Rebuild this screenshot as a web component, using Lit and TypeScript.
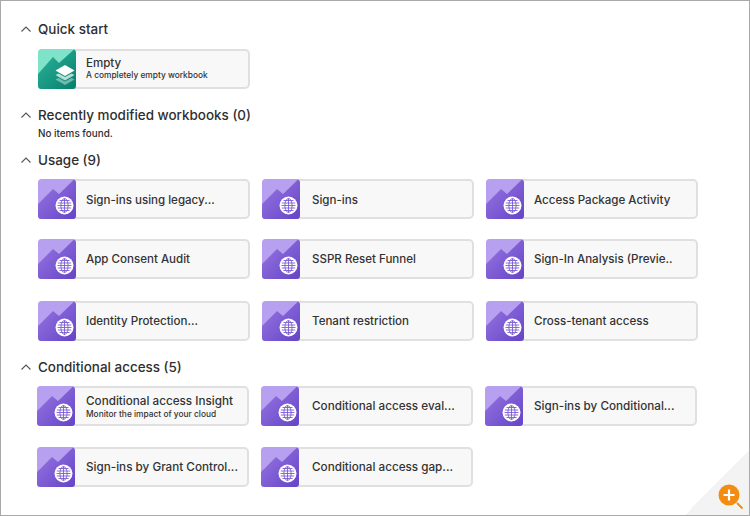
import { LitElement, html, css, svg } from "lit";
import { customElement } from "lit/decorators.js";

type Card = { t: string; s?: string };

const usage: Card[][] = [
  [{ t: "Sign-ins using legacy..." }, { t: "Sign-ins" }, { t: "Access Package Activity" }],
  [{ t: "App Consent Audit" }, { t: "SSPR Reset Funnel" }, { t: "Sign-In Analysis (Previe.." }],
  [{ t: "Identity Protection..." }, { t: "Tenant restriction" }, { t: "Cross-tenant access" }],
];
const cond: Card[][] = [
  [
    { t: "Conditional access Insight", s: "Monitor the impact of your cloud" },
    { t: "Conditional access eval..." },
    { t: "Sign-ins by Conditional..." },
  ],
  [{ t: "Sign-ins by Grant Control..." }, { t: "Conditional access gap..." }],
];

const chevron = html`<svg class="chev" width="12" height="8" viewBox="0 0 12 8" fill="none"><path d="M1.500 6.500 6 2l4.500 4.500" stroke="#555" stroke-width="1.100"/></svg>`;

const purpleIcon = html`<svg class="ico" width="38" height="40" viewBox="0 0 38 40">
  <defs>
    <linearGradient id="pg" x1="0" y1="0" x2="1" y2="1"><stop offset="0" stop-color="#9a78e4"/><stop offset="1" stop-color="#6444c6"/></linearGradient>
  </defs>
  <rect width="38" height="40" rx="3.500" fill="#b8a0f0"/>
  <path d="M0 25 15 10l6 5L36 .5A3.500 3.500 0 0 1 38 3.500v33a3.500 3.500 0 0 1-3.500 3.500h-31A3.500 3.500 0 0 1 0 36.500z" fill="url(#pg)"/>
  <circle cx="26.500" cy="26.500" r="9" fill="#fff"/>
  ${svg`<g fill="none" stroke="#7c5cd2" stroke-width=".9">
    <ellipse cx="26.500" cy="26.500" rx="3.600" ry="7"/>
    <path d="M26.500 19.500v14M19.800 24h13.400M19.800 29h13.400M21.500 21.500h10M21.500 31.500h10M19.500 26.500h14"/>
  </g>`}
</svg>`;

const greenIcon = html`<svg class="ico" width="38" height="40" viewBox="0 0 38 40">
  <defs>
    <linearGradient id="gg" x1="0" y1="0" x2="1" y2="1"><stop offset="0" stop-color="#2eb49c"/><stop offset="1" stop-color="#067f6c"/></linearGradient>
  </defs>
  <rect width="38" height="40" rx="3.500" fill="#7fe3c9"/>
  <path d="M0 25 15 8l6 6L36 .5A3.500 3.500 0 0 1 38 3.500v33a3.500 3.500 0 0 1-3.500 3.500h-31A3.500 3.500 0 0 1 0 36.500z" fill="url(#gg)"/>
  <path d="M27 36l-9.500-5.500 3-1.500 6.500 3.500 6.500-3.500 3 1.500z" fill="#fff" opacity=".4"/>
  <path d="M27 31.500l-9.500-5.500 3-1.500 6.500 3.500 6.500-3.500 3 1.500z" fill="#fff" opacity=".7"/>
  <path d="M27 27l-9.500-5.500L27 16l9.500 5.500z" fill="#fff"/>
</svg>`;

@customElement("app-root")
export class AppRoot extends LitElement {
  static styles = css`
    :host {
      display: block;
      box-sizing: border-box;
      width: 750px;
      height: 516px;
      border: 1px solid #a9a9a9;
      background: #fff;
      font-family: Inter, "Liberation Sans", sans-serif;
      color: #2f2f2f;
      overflow: hidden;
      position: relative;
      padding: 19px 0 0 19px;
    }
    .head {
      display: flex;
      align-items: center;
      height: 17px;
      gap: 6px;
      font-size: 13.450px;
      font-weight: 500;
      white-space: nowrap;
    }
    .chev { flex: none; }
    .rows { padding: 12px 0 0 18px; }
    .row { display: flex; gap: 12.500px; }
    .quick { height: 86px; }
    .quick .txt { padding-bottom: 2px; }
    .recent { height: 45px; }
    .none {
      font-size: 9.900px;
      font-weight: 500;
      padding: 4px 0 0 18px;
      line-height: 12px;
    }
    .usage { height: 207px; }
    .usage .rows { padding-top: 11px; }
    .usage .row:nth-child(1) .txt { padding-top: 1px; }
    .usage .row:nth-child(2) { margin-top: 20px; }
    .usage .row:nth-child(3) { margin-top: 22px; }
    .usage .card:nth-child(2) .txt { padding-left: 12px; }
    .cond .rows { padding: 11px 0 0 17px; }
    .cond .row:nth-child(2) { margin-top: 21px; }
    .cond .t { font-size: 11.700px; }
    .cond .s { margin-top: 1px; }
    .cond .txt { padding-left: 11px; }
    .cond .card:nth-child(2) .txt { padding-left: 13px; }
    .card {
      box-sizing: border-box;
      width: 211.500px;
      height: 40px;
      display: flex;
      align-items: stretch;
      background: #f8f8f8;
      border: 2px solid #e0e0e0;
      border-left: none;
      border-radius: 5px;
    }
    .ico { flex: none; margin: -2px 0; display: block; }
    .txt {
      flex: 1;
      min-width: 0;
      padding-left: 10px;
      display: flex;
      flex-direction: column;
      justify-content: center;
      white-space: nowrap;
    }
    .t { font-size: 11.550px; font-weight: 500; line-height: 14px; color: #333; }
    .s { font-size: 8.350px; font-weight: 500; line-height: 10px; color: #333; }
    .corner {
      position: absolute;
      right: 0;
      bottom: 0;
      width: 64px;
      height: 64px;
      background: linear-gradient(135deg, transparent 50%, #f3f3f3 50%);
    }
    .zoom { position: absolute; right: 0; bottom: 0; }
  `;

  private card(c: Card, icon = purpleIcon) {
    return html`<div class="card">
      ${icon}
      <div class="txt">
        <div class="t">${c.t}</div>
        ${c.s ? html`<div class="s">${c.s}</div>` : ""}
      </div>
    </div>`;
  }

  render() {
    return html`
      <section class="quick">
        <div class="head">${chevron}<span>Quick start</span></div>
        <div class="rows"><div class="row">${this.card({ t: "Empty", s: "A completely empty workbook" }, greenIcon)}</div></div>
      </section>
      <section class="recent">
        <div class="head">${chevron}<span>Recently modified workbooks (0)</span></div>
        <div class="none">No items found.</div>
      </section>
      <section class="usage">
        <div class="head">${chevron}<span>Usage (9)</span></div>
        <div class="rows">
          ${usage.map((r) => html`<div class="row">${r.map((c) => this.card(c))}</div>`)}
        </div>
      </section>
      <section class="cond">
        <div class="head">${chevron}<span>Conditional access (5)</span></div>
        <div class="rows">
          ${cond.map((r) => html`<div class="row">${r.map((c) => this.card(c))}</div>`)}
        </div>
      </section>
      <div class="corner"></div>
      <svg class="zoom" width="32" height="32" viewBox="0 0 32 32">
        <path d="M20 20l5.500 5.500" stroke="#f28c13" stroke-width="2"/>
        <circle cx="12" cy="12" r="10.500" fill="#f28c13"/>
        <path d="M12 6.500v11M6.500 12h11" stroke="#fff" stroke-width="2.200"/>
      </svg>
    `;
  }
}
